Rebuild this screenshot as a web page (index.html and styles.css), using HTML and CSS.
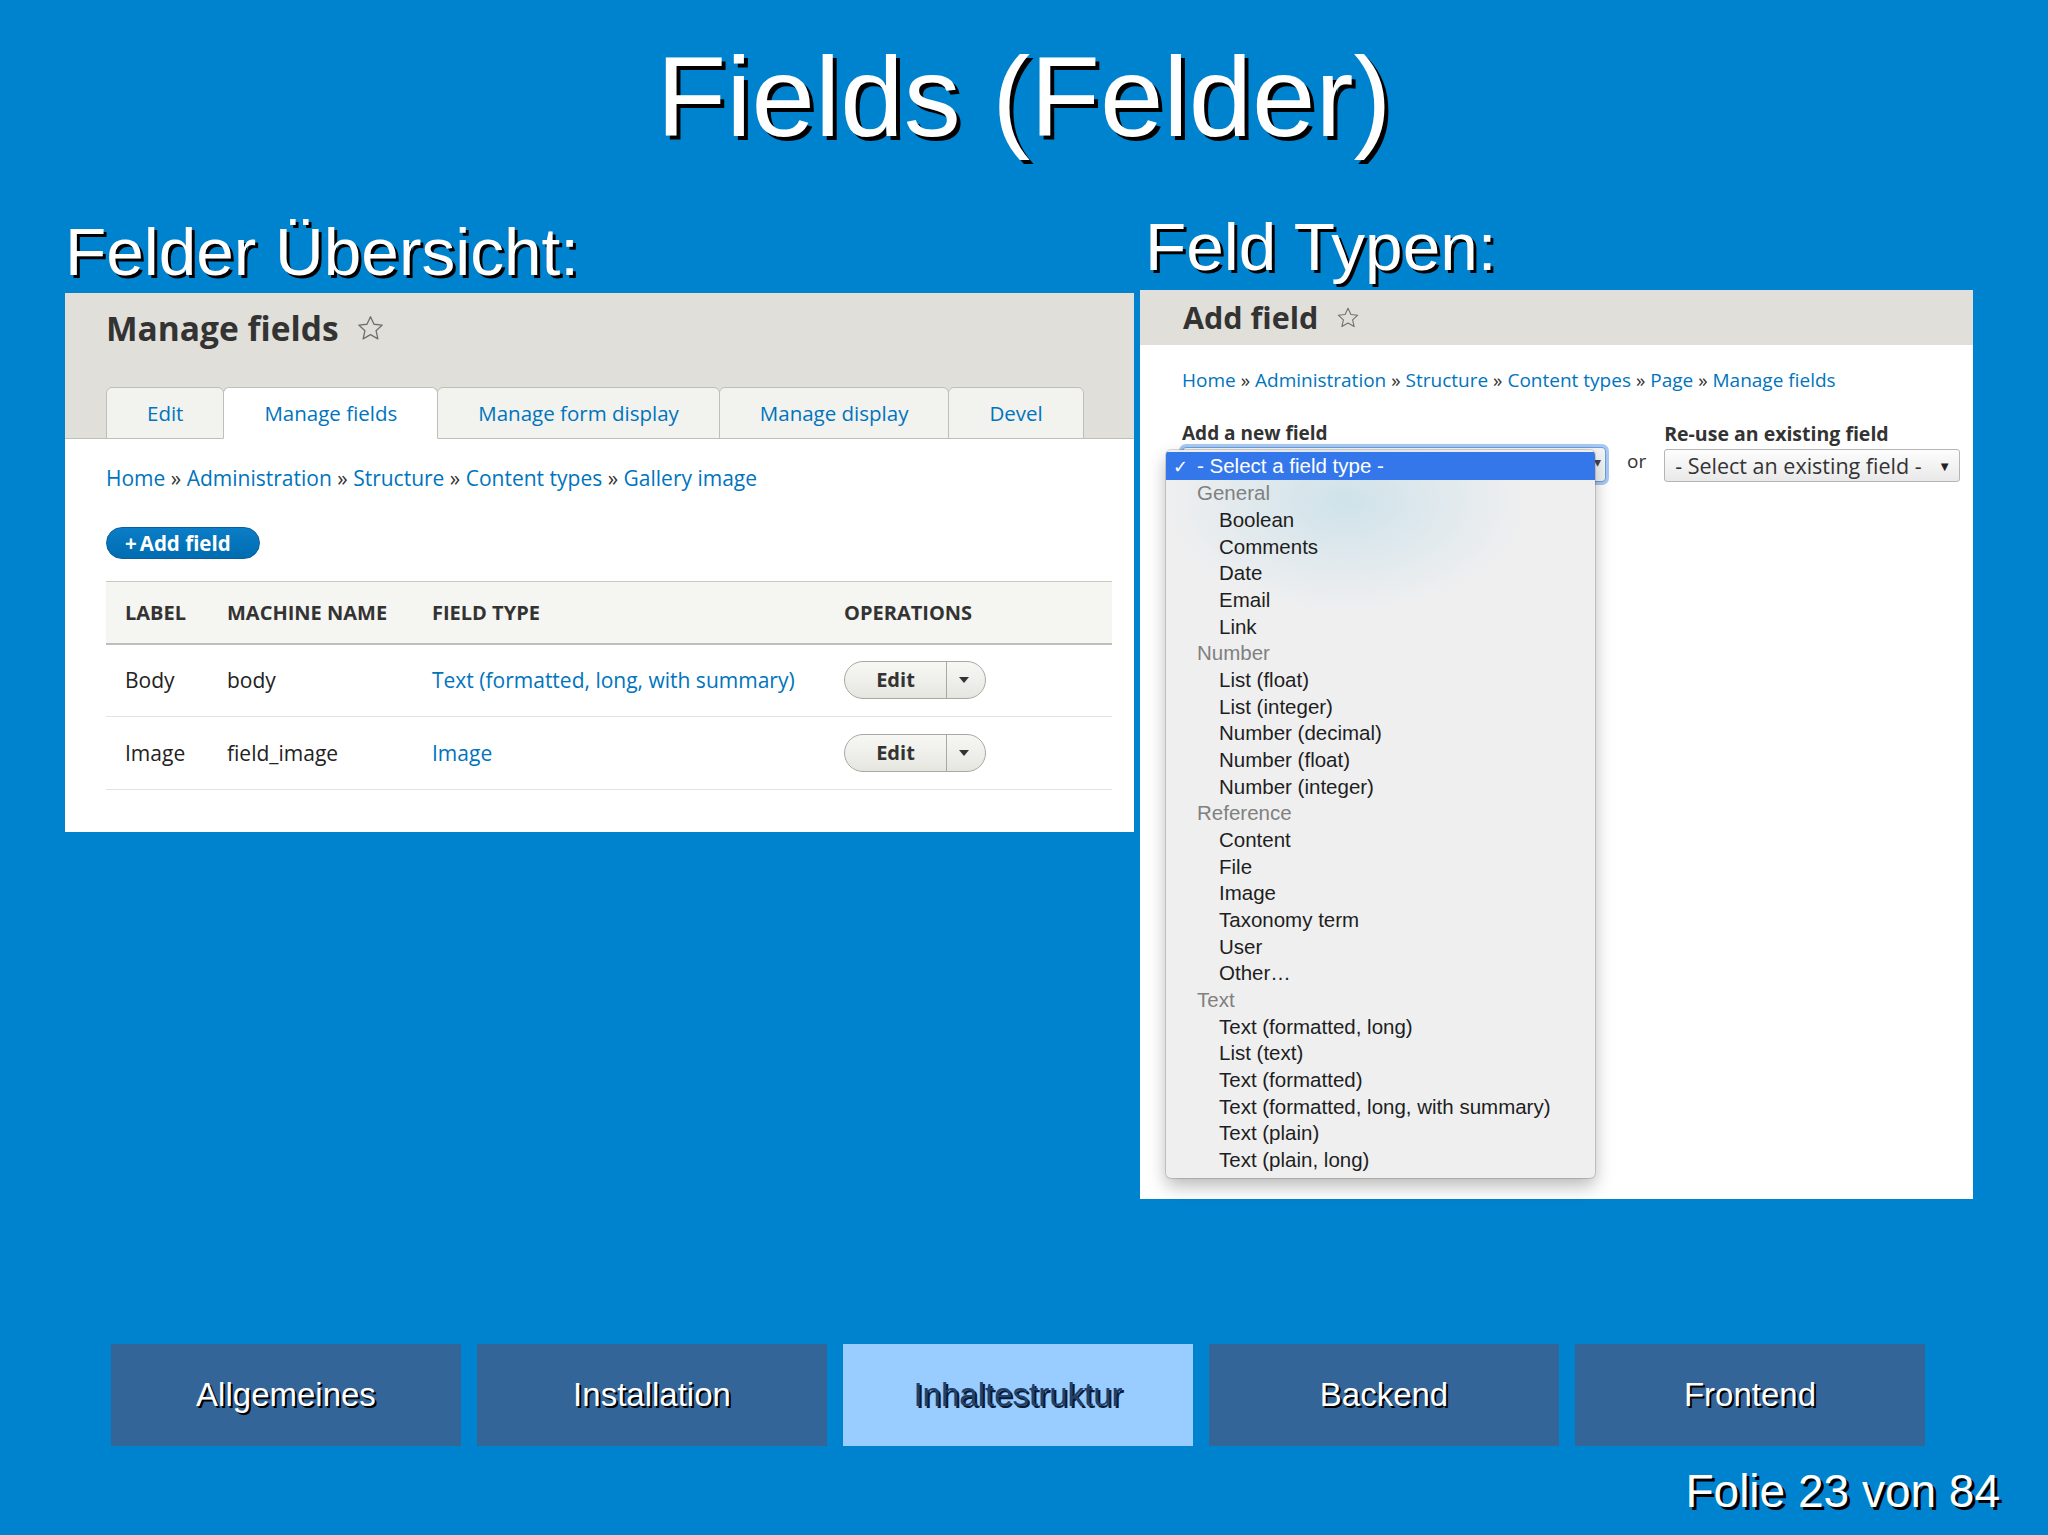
FILE: index.html
```html
<!DOCTYPE html>
<html lang="de">
<head>
<meta charset="utf-8">
<title>Fields (Felder)</title>
<link rel="stylesheet" href="styles.css">
</head>
<body>
<div class="slide">
  <h1 class="title">Fields (Felder)</h1>

  <div class="columns">
    <section class="col col-left">
      <h2 class="subhead">Felder Übersicht:</h2>
      <div class="shot shot-left">
        <div class="shot-head">
          <h3 class="page-title">Manage fields
            <svg class="star star-lg" viewBox="0 0 24 24"><path d="M12 2.2l2.9 6.3 6.8.7-5.1 4.6 1.5 6.8L12 17.1l-6.1 3.5 1.5-6.8-5.1-4.6 6.8-.7z"/></svg>
          </h3>
          <div class="tabs">
            <span class="tab">Edit</span>
            <span class="tab is-active">Manage fields</span>
            <span class="tab">Manage form display</span>
            <span class="tab">Manage display</span>
            <span class="tab">Devel</span>
          </div>
        </div>
        <div class="shot-body-left">
          <div class="crumbs">Home <span class="sep">»</span> Administration <span class="sep">»</span> Structure <span class="sep">»</span> Content types <span class="sep">»</span> Gallery image</div>
          <div class="add-btn"><span class="plus">+</span>Add field</div>
          <table class="fields">
            <colgroup>
              <col class="c-label"><col class="c-machine"><col class="c-type"><col class="c-ops">
            </colgroup>
            <thead>
              <tr><th>Label</th><th>Machine name</th><th>Field type</th><th>Operations</th></tr>
            </thead>
            <tbody>
              <tr>
                <td>Body</td><td>body</td><td class="link">Text (formatted, long, with summary)</td>
                <td><div class="opbtn"><span class="op-main">Edit</span><span class="op-caret"></span></div></td>
              </tr>
              <tr class="row-2">
                <td>Image</td><td>field_image</td><td class="link">Image</td>
                <td><div class="opbtn"><span class="op-main">Edit</span><span class="op-caret"></span></div></td>
              </tr>
            </tbody>
          </table>
        </div>
      </div>
    </section>

    <section class="col col-right">
      <h2 class="subhead">Feld Typen:</h2>
      <div class="shot shot-right">
        <div class="shot-head-right">
          <h3 class="page-title-sm">Add field</h3>
          <svg class="star star-sm" viewBox="0 0 24 24"><path d="M12 2.2l2.9 6.3 6.8.7-5.1 4.6 1.5 6.8L12 17.1l-6.1 3.5 1.5-6.8-5.1-4.6 6.8-.7z"/></svg>
        </div>
        <div class="shot-body-right">
          <div class="crumbs crumbs-sm">Home <span class="sep">»</span> Administration <span class="sep">»</span> Structure <span class="sep">»</span> Content types <span class="sep">»</span> Page <span class="sep">»</span> Manage fields</div>
          <div class="form-row">
            <div class="fld">
              <label class="fld-label">Add a new field</label>
              <div class="select-main">
                <span class="sm-arrow">▾</span>
                <div class="popup">
                  <div class="popup-sel"><span class="chk">✓</span>- Select a field type -</div>
                  <div class="grp">General</div>
                  <div class="opt">Boolean</div>
                  <div class="opt">Comments</div>
                  <div class="opt">Date</div>
                  <div class="opt">Email</div>
                  <div class="opt">Link</div>
                  <div class="grp">Number</div>
                  <div class="opt">List (float)</div>
                  <div class="opt">List (integer)</div>
                  <div class="opt">Number (decimal)</div>
                  <div class="opt">Number (float)</div>
                  <div class="opt">Number (integer)</div>
                  <div class="grp">Reference</div>
                  <div class="opt">Content</div>
                  <div class="opt">File</div>
                  <div class="opt">Image</div>
                  <div class="opt">Taxonomy term</div>
                  <div class="opt">User</div>
                  <div class="opt">Other…</div>
                  <div class="grp">Text</div>
                  <div class="opt">Text (formatted, long)</div>
                  <div class="opt">List (text)</div>
                  <div class="opt">Text (formatted)</div>
                  <div class="opt">Text (formatted, long, with summary)</div>
                  <div class="opt">Text (plain)</div>
                  <div class="opt">Text (plain, long)</div>
                </div>
              </div>
            </div>
            <span class="or">or</span>
            <div class="fld">
              <label class="fld-label fld-label-2">Re-use an existing field</label>
              <div class="select-existing"><span>- Select an existing field -</span><span class="se-arrow">▼</span></div>
            </div>
          </div>
        </div>
      </div>
    </section>
  </div>

  <nav class="slidenav">
    <span class="navbtn">Allgemeines</span>
    <span class="navbtn">Installation</span>
    <span class="navbtn is-current">Inhaltestruktur</span>
    <span class="navbtn">Backend</span>
    <span class="navbtn">Frontend</span>
  </nav>

  <div class="counter">Folie 23 von 84</div>
</div>
</body>
</html>
```

FILE: styles.css
```css
html, body {
  margin: 0;
  padding: 0;
}

body {
  background: #0083ce;
  width: 2048px;
  height: 1535px;
  overflow: hidden;
  font-family: "Liberation Sans", Arial, sans-serif;
}

.slide {
  width: 2048px;
  height: 1535px;
}

.title {
  margin: 0;
  padding-top: 40px;
  font-size: 114px;
  line-height: 114px;
  font-weight: normal;
  color: #fff;
  text-align: center;
  text-shadow: 4px 4px 0 #000;
}

.columns {
  display: flex;
  align-items: flex-start;
  gap: 6px;
  padding-left: 65px;
  margin-top: 60px;
}

.col-left {
  width: 1069px;
  padding-top: 5px;
}

.col-right {
  width: 833px;
}

.subhead {
  margin: 0;
  font-size: 67.5px;
  line-height: 66px;
  font-weight: normal;
  color: #fff;
  text-shadow: 3px 3px 0 #000;
}

.col-left .subhead {
  margin-bottom: 8px;
}

.col-right .subhead {
  margin-bottom: 10px;
  padding-left: 5px;
}

/* ---------- Drupal screenshots ---------- */
.shot {
  background: #fff;
  font-family: "Open Sans", "Noto Sans", sans-serif;
  color: #222;
}

.star path {
  fill: none;
  stroke: #707070;
  stroke-width: 1.1;
  stroke-linejoin: round;
}

.star-lg {
  width: 29px;
  height: 29px;
}

.star-sm {
  width: 24px;
  height: 24px;
}

/* left */
.shot-head {
  background: #e0dfd9;
  padding: 16px 0 0 41px;
  border-bottom: 1px solid #bfbfba;
}

.page-title {
  margin: 0;
  display: flex;
  align-items: center;
  gap: 17px;
  font-size: 33.5px;
  line-height: 39.6px;
  font-weight: 700;
  color: #333;
}

.tabs {
  display: flex;
  margin-top: 38.4px;
  margin-bottom: -1px;
}

.tab {
  box-sizing: border-box;
  height: 52px;
  padding: 0 40px;
  border: 1px solid #bfbfba;
  border-radius: 6px 6px 0 0;
  margin-right: -1px;
  background: #f2f2ef;
  color: #0074bd;
  font-size: 20.5px;
  line-height: 50px;
}

.tab.is-active {
  background: #fff;
  border-bottom-color: #fff;
  position: relative;
}

.shot-body-left {
  padding: 0 22px 42px 41px;
}

.crumbs {
  margin-top: 25px;
  font-size: 21px;
  line-height: 29.4px;
  color: #0074bd;
}

.crumbs .sep {
  color: #333;
}

.add-btn {
  box-sizing: border-box;
  width: 154px;
  height: 32px;
  margin-top: 33.6px;
  padding-left: 18px;
  border: 1px solid #0b5f9e;
  border-radius: 18px;
  background: linear-gradient(#0a7ec7, #006cb1);
  color: #fff;
  font-size: 20.5px;
  font-weight: 700;
  line-height: 30px;
}

.plus {
  margin-right: 3px;
}

.fields {
  margin-top: 22px;
  width: 1006px;
  border-collapse: collapse;
  table-layout: fixed;
}

.c-label { width: 102px; }
.c-machine { width: 205px; }
.c-type { width: 412px; }
.c-ops { width: 287px; }

.fields th {
  height: 61px;
  padding: 0 19px;
  background: #f5f5f2;
  border-top: 1px solid #c8c8c3;
  border-bottom: 2px solid #bfbfba;
  text-align: left;
  font-size: 20px;
  font-weight: 700;
  text-transform: uppercase;
  color: #333;
}

.fields td {
  height: 71px;
  padding: 0 19px;
  border-bottom: 1px solid #e4e3de;
  font-size: 21px;
  color: #222;
  vertical-align: middle;
}

.fields .row-2 td {
  height: 72px;
}

.fields td.link {
  color: #0074bd;
}

.opbtn {
  box-sizing: border-box;
  display: flex;
  width: 142px;
  height: 38px;
  border: 1px solid #a9a9a4;
  border-radius: 19px;
  background: linear-gradient(#f7f7f4, #e6e6e1);
}

.op-main {
  width: 101px;
  text-align: center;
  font-size: 20px;
  font-weight: 700;
  line-height: 36px;
  color: #333;
}

.op-caret {
  flex: 1;
  border-left: 1px solid #a9a9a4;
  display: flex;
  align-items: center;
  justify-content: center;
}

.op-caret::before {
  content: "";
  border-left: 5px solid transparent;
  border-right: 5px solid transparent;
  border-top: 6px solid #333;
  margin-right: 4px;
}

/* right */
.shot-right {
  height: 909px;
}

.shot-head-right {
  display: flex;
  align-items: center;
  gap: 18px;
  height: 55px;
  padding-left: 43px;
  background: #e0dfd9;
}

.page-title-sm {
  margin: 0;
  font-size: 30.5px;
  line-height: 55px;
  font-weight: 700;
  color: #333;
}

.shot-body-right {
  padding: 0 13px 0 42px;
}

.crumbs-sm {
  margin-top: 22px;
  font-size: 19px;
  line-height: 26.6px;
}

.form-row {
  display: flex;
  align-items: flex-end;
  margin-top: 29px;
}

.fld-label {
  display: block;
  margin-bottom: 3px;
  font-size: 19px;
  line-height: 21.6px;
  font-weight: 700;
  color: #333;
}

.fld-label-2 {
  margin-bottom: 5px;
  font-size: 19.5px;
}

.select-main {
  position: relative;
  box-sizing: border-box;
  width: 424px;
  height: 35px;
  border: 1px solid #6a9fdf;
  border-radius: 4px;
  background: #f4f4f4;
  box-shadow: 0 0 0 3px rgba(96, 156, 232, 0.55);
}

.sm-arrow {
  position: absolute;
  right: 4px;
  top: 4px;
  font-size: 14px;
  color: #444;
}

.popup {
  position: absolute;
  left: -17px;
  top: 2px;
  z-index: 2;
  box-sizing: border-box;
  width: 429px;
  height: 728px;
  border-radius: 5px;
  background:
    radial-gradient(ellipse 180px 110px at 42% 7%, rgba(196, 222, 232, 0.75), rgba(239, 239, 240, 0) 100%),
    #efeff0;
  box-shadow: 0 0 0 1px rgba(0, 0, 0, 0.14), 0 8px 18px rgba(0, 0, 0, 0.28);
  font-family: "Liberation Sans", Arial, sans-serif;
  font-size: 20.5px;
  overflow: hidden;
}

.popup-sel {
  margin-top: 2px;
  height: 28px;
  padding-left: 7px;
  background: #3477ea;
  color: #fff;
  line-height: 28px;
}

.chk {
  display: inline-block;
  width: 24px;
  font-family: "DejaVu Sans", sans-serif;
  font-size: 18px;
  font-weight: 700;
}

.grp {
  padding-left: 31px;
  line-height: 26.67px;
  color: #808080;
}

.opt {
  padding-left: 53px;
  line-height: 26.67px;
  color: #1e1e1e;
}

.or {
  margin: 0 18px 6px 21px;
  font-size: 19px;
  line-height: 30px;
  color: #333;
}

.select-existing {
  box-sizing: border-box;
  display: flex;
  align-items: center;
  justify-content: space-between;
  width: 296px;
  height: 33px;
  padding: 0 8px 0 10px;
  border: 1px solid #b5b5b5;
  border-radius: 3px;
  background: linear-gradient(#fdfdfd, #e9e9e9);
  font-size: 21.5px;
  color: #333;
}

.se-arrow {
  font-size: 13px;
  color: #222;
}

/* ---------- slide navigation ---------- */
.slidenav {
  display: flex;
  gap: 16px;
  padding-left: 111px;
  margin-top: 145px;
}

.navbtn {
  width: 350px;
  height: 102px;
  background: #346599;
  color: #fff;
  font-size: 33px;
  line-height: 102px;
  text-align: center;
  text-shadow: 2px 2px 0 #000;
}

.navbtn.is-current {
  background: #99ccff;
  color: #21406b;
  text-shadow: 2px 2px 0 #0b1a30;
}

.counter {
  margin-top: 22px;
  padding-right: 48px;
  text-align: right;
  font-size: 46px;
  line-height: 46px;
  color: #fff;
  text-shadow: 3px 3px 0 #000;
}
```
